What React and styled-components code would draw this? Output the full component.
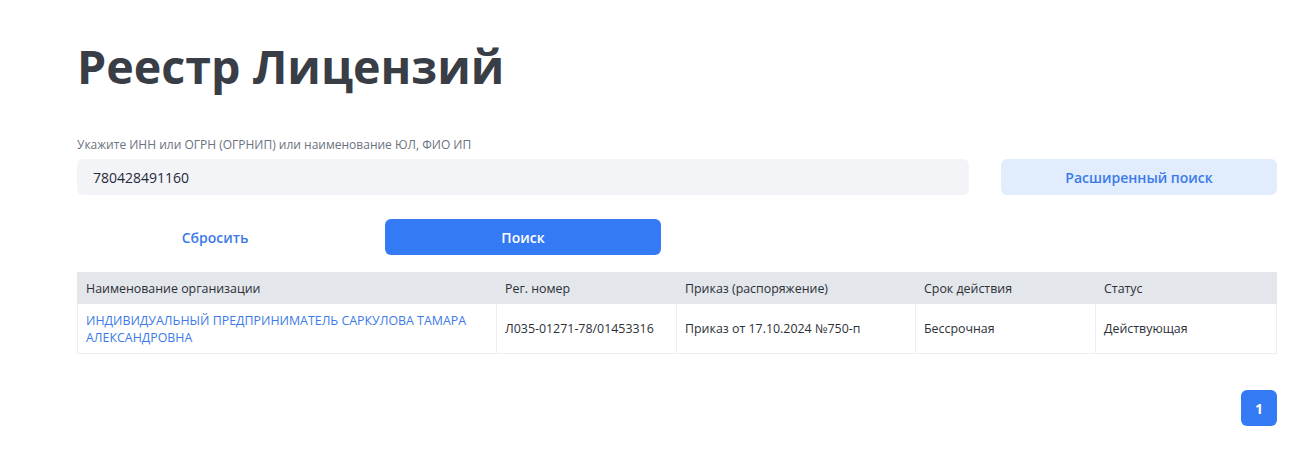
import React from "react";
import styled, { createGlobalStyle } from "styled-components";

const GlobalStyle = createGlobalStyle`
  html, body {
    margin: 0;
    padding: 0;
    background: #ffffff;
    font-family: "Open Sans", "Noto Sans", sans-serif;
  }
  * {
    box-sizing: border-box;
  }
`;

const Page = styled.div`
  width: 1200px;
  margin-left: 77px;
  padding-top: 34px;
`;

const Title = styled.h1`
  margin: 0 0 39px;
  font-size: 46.6px;
  line-height: 64px;
  font-weight: 700;
  color: #383d46;
`;

const Label = styled.div`
  font-size: 12px;
  line-height: 16px;
  color: #6b7280;
  margin-bottom: 6px;
`;

const Grid = styled.div`
  display: grid;
  grid-template-columns: repeat(4, 1fr);
  column-gap: 32px;
  margin-bottom: ${(p) => p.$mb || 0}px;
`;

const Input = styled.input`
  grid-column: span 3;
  height: 36px;
  border: none;
  border-radius: 6px;
  background: #f3f4f7;
  padding: 0 16px;
  font-family: inherit;
  font-size: 14px;
  color: #1f2937;
  outline: none;
`;

const Button = styled.button`
  height: 36px;
  border: none;
  border-radius: 6px;
  font-family: inherit;
  font-size: 14px;
  font-weight: 600;
  cursor: pointer;
  background: ${(p) =>
    p.$variant === "primary" ? "#347af4" : p.$variant === "soft" ? "#e1edfd" : "transparent"};
  color: ${(p) => (p.$variant === "primary" ? "#ffffff" : "#3b7ae8")};
`;

const Table = styled.table`
  width: 100%;
  border-collapse: collapse;
  font-size: 12.4px;
  color: #2b2f36;
`;

const Th = styled.th`
  background: #e3e6eb;
  font-weight: 400;
  text-align: left;
  height: 31px;
  padding: 0 8px;
  border: 1px solid #e3e6eb;
  border-left: 1px solid #eef0f3;
  width: ${(p) => p.$w}px;
  &:first-child {
    border-left-color: #e3e6eb;
  }
`;

const Td = styled.td`
  height: 50px;
  padding: 4px 8px;
  border: 1px solid #eceef1;
  line-height: 17px;
`;

const OrgLink = styled.a`
  color: #3b7ae8;
  text-decoration: none;
  cursor: pointer;
`;

const Pagination = styled.div`
  display: flex;
  justify-content: flex-end;
  margin-top: 36px;
`;

const PageBtn = styled.button`
  width: 36px;
  height: 36px;
  border: none;
  border-radius: 6px;
  background: #347af4;
  color: #ffffff;
  font-family: inherit;
  font-size: 14px;
  font-weight: 700;
`;

const columns = [
  { title: "Наименование организации", w: 419 },
  { title: "Рег. номер", w: 180 },
  { title: "Приказ (распоряжение)", w: 239 },
  { title: "Срок действия", w: 180 },
  { title: "Статус", w: 181 },
];

export default function App() {
  return (
    <>
      <GlobalStyle />
      <Page>
        <Title>Реестр Лицензий</Title>
        <Label>Укажите ИНН или ОГРН (ОГРНИП) или наименование ЮЛ, ФИО ИП</Label>
        <Grid $mb={24}>
          <Input defaultValue="780428491160" />
          <Button $variant="soft">Расширенный поиск</Button>
        </Grid>
        <Grid $mb={17}>
          <Button>Сбросить</Button>
          <Button $variant="primary">Поиск</Button>
        </Grid>
        <Table>
          <thead>
            <tr>
              {columns.map((c) => (
                <Th key={c.title} $w={c.w}>
                  {c.title}
                </Th>
              ))}
            </tr>
          </thead>
          <tbody>
            <tr>
              <Td>
                <OrgLink>ИНДИВИДУАЛЬНЫЙ ПРЕДПРИНИМАТЕЛЬ САРКУЛОВА ТАМАРА АЛЕКСАНДРОВНА</OrgLink>
              </Td>
              <Td>Л035-01271-78/01453316</Td>
              <Td>Приказ от 17.10.2024 №750-п</Td>
              <Td>Бессрочная</Td>
              <Td>Действующая</Td>
            </tr>
          </tbody>
        </Table>
        <Pagination>
          <PageBtn>1</PageBtn>
        </Pagination>
      </Page>
    </>
  );
}
